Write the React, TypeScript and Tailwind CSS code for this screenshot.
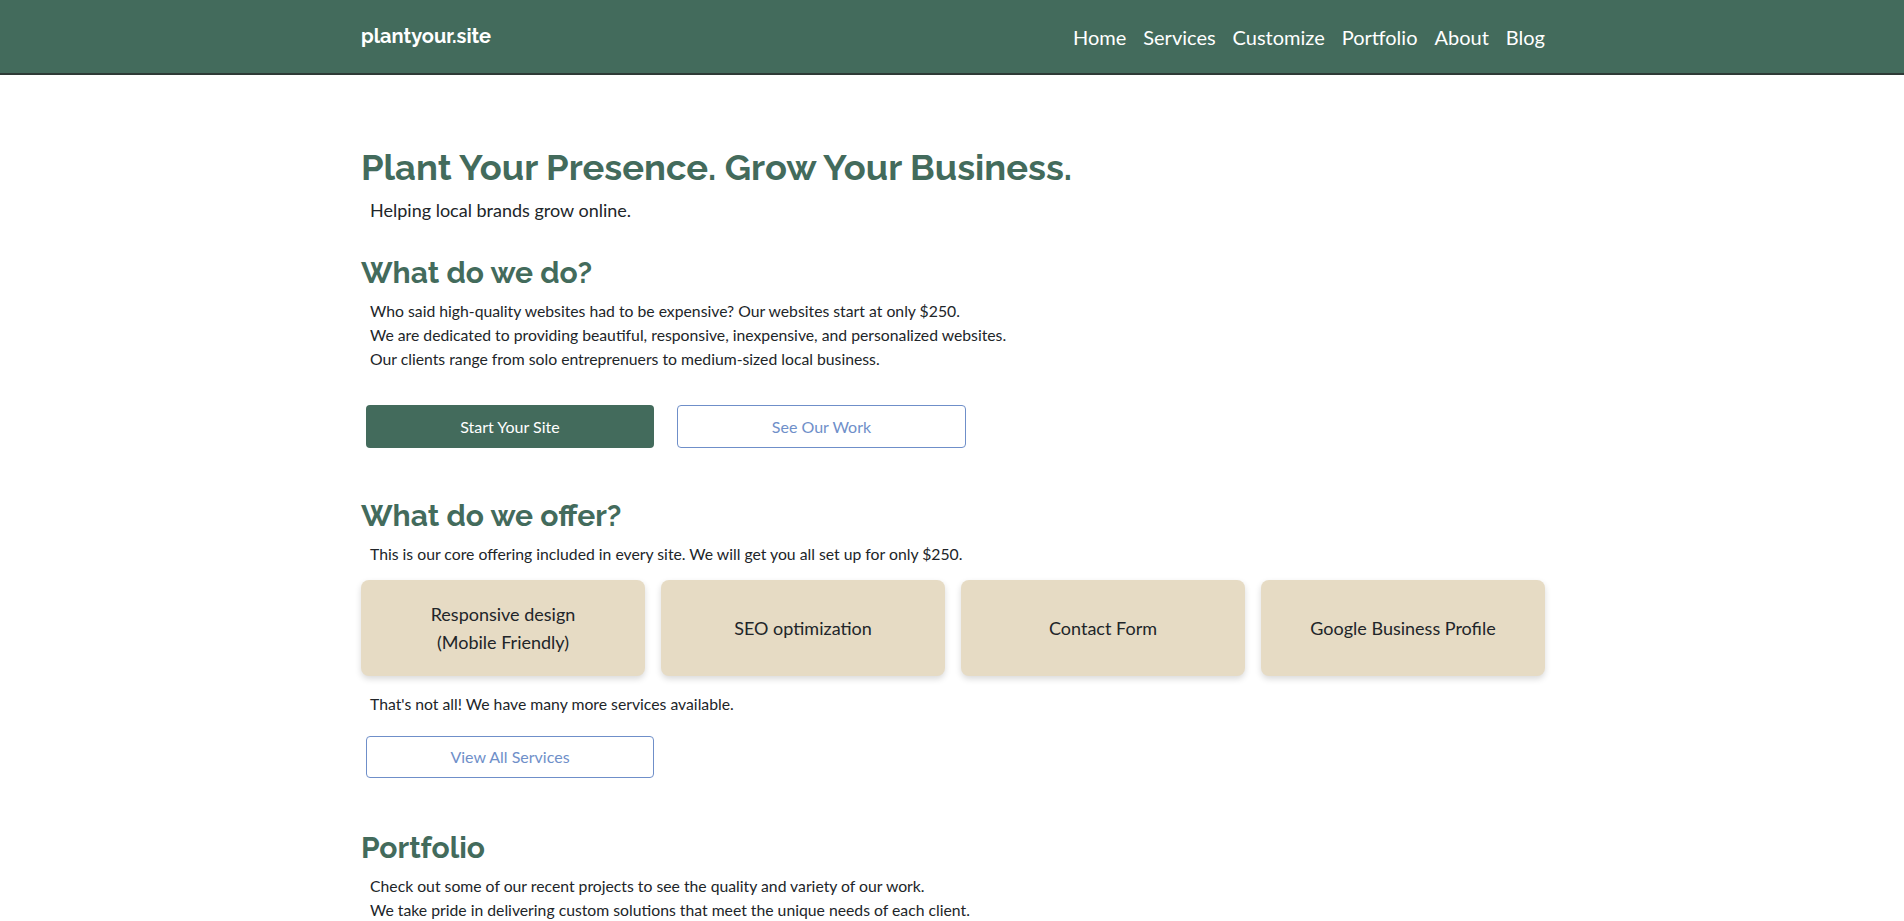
const navLinks = ["Home", "Services", "Customize", "Portfolio", "About", "Blog"];

const offerings = [
  ["Responsive design", "(Mobile Friendly)"],
  ["SEO optimization"],
  ["Contact Form"],
  ["Google Business Profile"],
];

const heading = "font-['Raleway','Lato',sans-serif] font-bold text-[#436b5c]";

const App = () => {
  return (
    <div className="min-h-screen bg-white font-['Lato','Open_Sans',sans-serif] text-[#212529]">
      <nav className="h-[75px] border-b-2 border-[#2e3a36] bg-[#436b5c]">
        <div className="mx-auto flex h-full w-[1184px] translate-x-[1px] items-center justify-between">
          <a href="#" className="pb-[1px] font-['Raleway','Lato',sans-serif] text-[20px] font-bold text-white">
            plantyour.site
          </a>
          <ul className="flex items-center gap-[17px] text-[20px] text-white">
            {navLinks.map((l) => (
              <li key={l}>
                <a href="#">{l}</a>
              </li>
            ))}
          </ul>
        </div>
      </nav>

      <main className="mx-auto w-[1184px] translate-x-[1px] pt-[68px]">
        <h1 className={`${heading} text-[36.3px] leading-[48px]`}>
          Plant Your Presence. Grow Your Business.
        </h1>
        <p className="mt-[6px] pl-[9px] text-[18px] leading-[26px]">
          Helping local brands grow online.
        </p>

        <h2 className={`${heading} mt-[30px] text-[30px] leading-[40px]`}>What do we do?</h2>
        <div className="mt-[6px] pl-[9px] text-[15.75px] leading-[24px]">
          <p>Who said high-quality websites had to be expensive? Our websites start at only $250.</p>
          <p>We are dedicated to providing beautiful, responsive, inexpensive, and personalized websites.</p>
          <p>Our clients range from solo entreprenuers to medium-sized local business.</p>
        </div>
        <div className="mt-[34px] flex gap-[23px] pl-[5px]">
          <a href="#" className="flex h-[43px] w-[288px] items-center justify-center rounded-[4px] bg-[#436b5c] text-[16px] text-white">
            Start Your Site
          </a>
          <a href="#" className="flex h-[43px] w-[289px] items-center justify-center rounded-[4px] border border-[#6f8fc9] text-[16px] text-[#6f8fc9]">
            See Our Work
          </a>
        </div>

        <h2 className={`${heading} mt-[48px] text-[30px] leading-[40px]`}>What do we offer?</h2>
        <p className="mt-[6px] pl-[9px] text-[15.75px] leading-[24px]">
          This is our core offering included in every site. We will get you all set up for only $250.
        </p>
        <div className="mt-[14px] grid grid-cols-4 gap-[16px]">
          {offerings.map((lines) => (
            <div
              key={lines[0]}
              className="flex h-[96px] flex-col items-center justify-center rounded-[8px] bg-[#e6dbc4] text-[18px] leading-[28px] shadow-[0_3px_6px_rgba(0,0,0,0.15)]"
            >
              {lines.map((t) => (
                <span key={t}>{t}</span>
              ))}
            </div>
          ))}
        </div>
        <p className="mt-[16px] pl-[9px] text-[15.75px] leading-[24px]">
          That's not all! We have many more services available.
        </p>
        <div className="mt-[20px] pl-[5px]">
          <a href="#" className="flex h-[42px] w-[288px] items-center justify-center rounded-[4px] border border-[#6f8fc9] text-[16px] text-[#6f8fc9]">
            View All Services
          </a>
        </div>

        <h2 className={`${heading} mt-[50px] text-[30px] leading-[40px]`}>Portfolio</h2>
        <div className="mt-[6px] pl-[9px] text-[15.75px] leading-[24px]">
          <p>Check out some of our recent projects to see the quality and variety of our work.</p>
          <p>We take pride in delivering custom solutions that meet the unique needs of each client.</p>
        </div>
      </main>
    </div>
  );
};

export default App;
